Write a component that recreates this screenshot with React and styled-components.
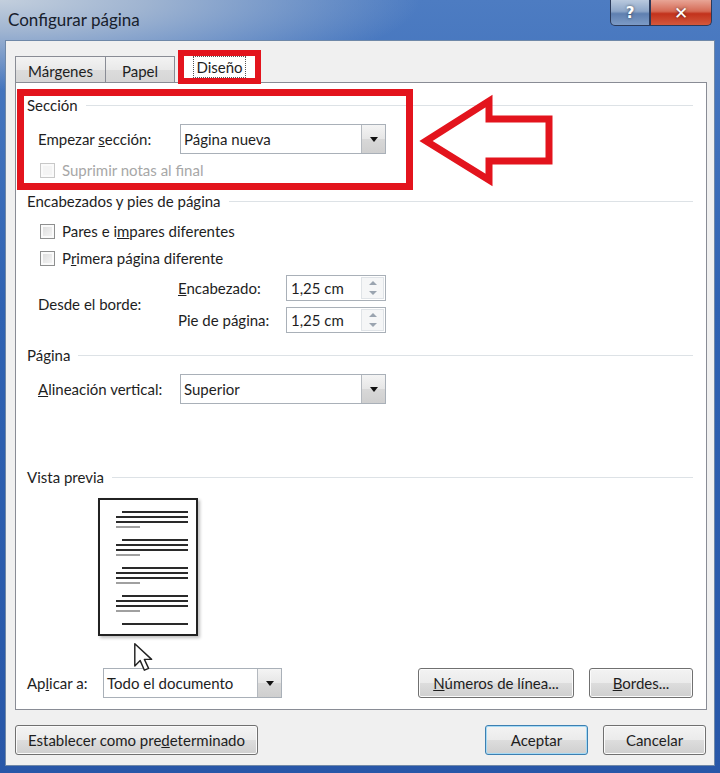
import styled, { createGlobalStyle } from "styled-components";

const GlobalStyle = createGlobalStyle`
  html, body {
    margin: 0;
    padding: 0;
    background: #2b5cab;
  }
  body {
    font-family: Lato, "Noto Sans", sans-serif;
    color: #1e1e1e;
  }
`;

const ROJO = "#e3141d";

const Ventana = styled.div`
  width: 720px;
  height: 773px;
  box-sizing: border-box;
  display: flex;
  flex-direction: column;
  padding: 0 5px 7px 5px;
  background:
    radial-gradient(ellipse 420px 90px at 0 0, #c3cfdd 0%, #9fb4d1 35%, rgba(90, 130, 190, 0) 100%),
    linear-gradient(180deg, #4d7cc2 0%, #2f62b2 40%, #2857a8 100%);
`;

const BarraTitulo = styled.div`
  height: 40px;
  display: flex;
  align-items: flex-start;
`;

const Titulo = styled.div`
  margin: 9px 0 0 3px;
  font-size: 17px;
  line-height: 22px;
  color: #17202c;
`;

const BotonesVentana = styled.div`
  margin-left: auto;
  margin-right: 3px;
  display: flex;
`;

const BotonVentana = styled.div`
  width: ${(p) => p.$ancho}px;
  height: 26px;
  box-sizing: border-box;
  border: 1px solid #2a3a5a;
  border-top: none;
  border-radius: ${(p) => (p.$cerrar ? "0 0 5px 0" : "0 0 0 5px")};
  display: flex;
  align-items: center;
  justify-content: center;
  color: #fff;
  font-family: "DejaVu Sans", sans-serif;
  font-weight: bold;
  font-size: ${(p) => (p.$cerrar ? 17 : 15)}px;
  text-shadow: 0 0 3px rgba(0, 0, 0, 0.6);
  background: ${(p) =>
    p.$cerrar
      ? "linear-gradient(180deg, #e8a596 0%, #d56a55 45%, #c2321c 55%, #d4583c 100%)"
      : "linear-gradient(180deg, #b9c9de 0%, #8da6c8 45%, #5f80b0 55%, #7d9bc6 100%)"};
`;

const Cliente = styled.div`
  flex: 1;
  display: flex;
  flex-direction: column;
  background: #f0f0f0;
  border: 1px solid #6f88a8;
  padding: 9px 7px 10px 9px;
`;

const FilaPestanas = styled.div`
  display: flex;
  align-items: flex-end;
  height: 33px;
  margin-bottom: -1px;
  position: relative;
  z-index: 1;
`;

const Pestana = styled.div`
  position: relative;
  box-sizing: border-box;
  width: ${(p) => p.$ancho}px;
  height: ${(p) => (p.$activa ? 33 : 27)}px;
  margin-left: ${(p) => (p.$activa ? 8 : p.$primera ? 0 : -1)}px;
  border: 1px solid #898c95;
  border-bottom: ${(p) => (p.$activa ? "none" : "1px solid #898c95")};
  background: ${(p) =>
    p.$activa ? "#ffffff" : "linear-gradient(180deg, #f3f3f3 0%, #e9e9e9 50%, #dcdcdc 51%, #d6d6d6 100%)"};
  font-size: 15px;
  display: flex;
  align-items: center;
  justify-content: center;
  padding-top: ${(p) => (p.$activa ? 0 : 2)}px;

  ${(p) =>
    p.$activa &&
    `
    &::after {
      content: "";
      position: absolute;
      left: -6px;
      right: -6px;
      top: -1px;
      bottom: -1px;
      border: 6px solid ${ROJO};
    }
  `}
`;

const TextoFoco = styled.span`
  outline: 1px dotted #555;
  outline-offset: 1px;
  padding: 0 1px;
`;

const Panel = styled.div`
  position: relative;
  height: 628px;
  box-sizing: border-box;
  background: #ffffff;
  border: 1px solid #898c95;
  padding: 12px 13px 0 11px;
  display: flex;
  flex-direction: column;
`;

const Grupo = styled.div`
  display: flex;
  align-items: center;
  height: 20px;
  margin-top: ${(p) => p.$arriba || 0}px;
  font-size: 15px;

  &::after {
    content: "";
    flex: 1;
    height: 1px;
    margin-left: 8px;
    background: #dde2e6;
  }
`;

const Fila = styled.div`
  display: flex;
  align-items: center;
  margin-top: ${(p) => p.$arriba || 0}px;
  margin-left: ${(p) => p.$sangria || 0}px;
  font-size: 15px;
`;

const FilaCasilla = styled(Fila)`
  height: 20px;
`;

const Etiqueta = styled.span`
  width: ${(p) => (p.$ancho ? `${p.$ancho}px` : "auto")};
  flex-shrink: 0;
  white-space: nowrap;
  color: ${(p) => (p.$inactiva ? "#a7a7a7" : "inherit")};
`;

const Combo = styled.div`
  width: ${(p) => p.$ancho}px;
  height: 30px;
  box-sizing: border-box;
  border: 1px solid #a9b0b8;
  background: #fff;
  display: flex;
  align-items: stretch;
  font-size: 15px;
`;

const ComboTexto = styled.span`
  flex: 1;
  padding-left: 3px;
  display: flex;
  align-items: center;
`;

const ComboBoton = styled.span`
  width: 23px;
  border-left: 1px solid #b4b9bf;
  background: linear-gradient(180deg, #f4f4f4 0%, #e6e6e6 50%, #d8d8d8 51%, #cfcfcf 100%);
  display: flex;
  align-items: center;
  justify-content: center;

  &::after {
    content: "";
    border-left: 4px solid transparent;
    border-right: 4px solid transparent;
    border-top: 5px solid #111;
  }
`;

const Casilla = styled.span`
  width: 15px;
  height: 15px;
  box-sizing: border-box;
  margin: 0 7px 0 2px;
  border: 1px solid ${(p) => (p.$inactiva ? "#c8c8c8" : "#8e8f8f")};
  background: ${(p) =>
    p.$inactiva ? "#f4f4f4" : "linear-gradient(135deg, #d9d9d9 0%, #ececec 60%, #f6f6f6 100%)"};
  box-shadow: inset 0 0 0 2px #fafafa;
  flex-shrink: 0;
`;

const BloqueBorde = styled.div`
  display: flex;
  align-items: center;
  margin: 7px 0 0 11px;
  font-size: 15px;
`;

const ColumnaSpin = styled.div`
  display: flex;
  flex-direction: column;
  gap: 6px;
`;

const Spin = styled.div`
  width: 100px;
  height: 26px;
  box-sizing: border-box;
  border: 1px solid #a9b0b8;
  background: #fff;
  display: flex;
`;

const SpinTexto = styled.span`
  flex: 1;
  padding-left: 4px;
  display: flex;
  align-items: center;
`;

const SpinFlechas = styled.span`
  width: 21px;
  margin: 1px;
  display: flex;
  flex-direction: column;
  border: 1px solid #dfe3e7;
  background: #f5f6f7;
`;

const SpinFlecha = styled.span`
  flex: 1;
  display: flex;
  align-items: center;
  justify-content: center;

  &::after {
    content: "";
    border-left: 4px solid transparent;
    border-right: 4px solid transparent;
    ${(p) => (p.$arriba ? "border-bottom" : "border-top")}: 4px solid #9aa4b0;
  }
`;

const HojaPrevia = styled.div`
  width: 100px;
  height: 138px;
  margin: 11px 0 0 71px;
  box-sizing: border-box;
  border: 2px solid #222;
  background: #fff;
  box-shadow: 2px 2px 3px rgba(0, 0, 0, 0.25);
`;

const Boton = styled.div`
  width: ${(p) => p.$ancho}px;
  height: 30px;
  box-sizing: border-box;
  border: 1px solid ${(p) => (p.$defecto ? "#3c7fb1" : "#707070")};
  border-radius: 3px;
  background: linear-gradient(180deg, #f3f3f3 0%, #ebebeb 49%, #dddddd 50%, #cfcfcf 100%);
  box-shadow: inset 0 0 0 1px ${(p) => (p.$defecto ? "#a6daf5" : "#fbfbfb")};
  display: flex;
  align-items: center;
  justify-content: center;
  font-size: 15px;
  white-space: nowrap;
`;

const FilaAplicar = styled.div`
  display: flex;
  align-items: center;
  margin-top: 32px;
  font-size: 15px;
  gap: 15px;
`;

const FilaInferior = styled.div`
  display: flex;
  gap: 15px;
  margin-top: 15px;
  padding-right: 1px;
`;

const Separador = styled.div`
  flex: 1;
`;

const MarcoRojo = styled.div`
  position: absolute;
  left: 1px;
  top: 6px;
  width: 396px;
  height: 101px;
  box-sizing: border-box;
  border: 7px solid ${ROJO};
  pointer-events: none;
`;

const Superpuesto = styled.svg`
  position: absolute;
  pointer-events: none;
`;

const lineasPrevia = () => {
  const grupos = [0, 28, 56, 84];
  const out = [];
  grupos.forEach((g, i) => {
    out.push(<line key={`a${i}`} x1="22" x2="88" y1={12 + g} y2={12 + g} />);
    out.push(<line key={`b${i}`} x1="16" x2="88" y1={17 + g} y2={17 + g} />);
    out.push(<line key={`c${i}`} x1="16" x2="88" y1={22 + g} y2={22 + g} />);
    out.push(
      <line key={`d${i}`} x1="16" x2="40" y1={27 + g} y2={27 + g} stroke="#777" strokeWidth="1.4" />
    );
  });
  out.push(<line key="fin" x1="22" x2="88" y1="124" y2="124" />);
  return out;
};

export default function App() {
  return (
    <>
      <GlobalStyle />
      <Ventana>
        <BarraTitulo>
          <Titulo>Configurar página</Titulo>
          <BotonesVentana>
            <BotonVentana $ancho={40}>?</BotonVentana>
            <BotonVentana $ancho={62} $cerrar>
              ✕
            </BotonVentana>
          </BotonesVentana>
        </BarraTitulo>

        <Cliente>
          <FilaPestanas>
            <Pestana $ancho={91} $primera>
              Márgenes
            </Pestana>
            <Pestana $ancho={70}>Papel</Pestana>
            <Pestana $ancho={73} $activa>
              <TextoFoco>Diseño</TextoFoco>
            </Pestana>
          </FilaPestanas>

          <Panel>
            <Grupo>Sección</Grupo>
            <Fila $arriba={9} $sangria={11}>
              <Etiqueta $ancho={142}>
                Empezar <u>s</u>ección:
              </Etiqueta>
              <Combo $ancho={206}>
                <ComboTexto>Página nueva</ComboTexto>
                <ComboBoton />
              </Combo>
            </Fila>
            <FilaCasilla $arriba={6} $sangria={11}>
              <Casilla $inactiva />
              <Etiqueta $inactiva>Suprimir notas al final</Etiqueta>
            </FilaCasilla>

            <Grupo $arriba={11}>Encabezados y pies de página</Grupo>
            <FilaCasilla $arriba={10} $sangria={11}>
              <Casilla />
              <Etiqueta>
                Pares e i<u>m</u>pares diferentes
              </Etiqueta>
            </FilaCasilla>
            <FilaCasilla $arriba={7} $sangria={11}>
              <Casilla />
              <Etiqueta>
                P<u>r</u>imera página diferente
              </Etiqueta>
            </FilaCasilla>
            <BloqueBorde>
              <Etiqueta $ancho={140}>Desde el borde:</Etiqueta>
              <ColumnaSpin>
                <Fila>
                  <Etiqueta $ancho={108}>
                    <u>E</u>ncabezado:
                  </Etiqueta>
                  <Spin>
                    <SpinTexto>1,25 cm</SpinTexto>
                    <SpinFlechas>
                      <SpinFlecha $arriba />
                      <SpinFlecha />
                    </SpinFlechas>
                  </Spin>
                </Fila>
                <Fila>
                  <Etiqueta $ancho={108}>Pie de página:</Etiqueta>
                  <Spin>
                    <SpinTexto>1,25 cm</SpinTexto>
                    <SpinFlechas>
                      <SpinFlecha $arriba />
                      <SpinFlecha />
                    </SpinFlechas>
                  </Spin>
                </Fila>
              </ColumnaSpin>
            </BloqueBorde>

            <Grupo $arriba={12}>Página</Grupo>
            <Fila $arriba={9} $sangria={11}>
              <Etiqueta $ancho={142}>
                <u>A</u>lineación vertical:
              </Etiqueta>
              <Combo $ancho={206}>
                <ComboTexto>Superior</ComboTexto>
                <ComboBoton />
              </Combo>
            </Fila>

            <Grupo $arriba={63}>Vista previa</Grupo>
            <HojaPrevia>
              <svg width="96" height="134" viewBox="0 0 96 134" stroke="#2a2a2a" strokeWidth="2">
                {lineasPrevia()}
              </svg>
            </HojaPrevia>

            <FilaAplicar>
              <Etiqueta $ancho={61}>
                Ap<u>l</u>icar a:
              </Etiqueta>
              <Combo $ancho={179}>
                <ComboTexto>Todo el documento</ComboTexto>
                <ComboBoton />
              </Combo>
              <Separador />
              <Boton $ancho={156}>
                <span>
                  <u>N</u>úmeros de línea...
                </span>
              </Boton>
              <Boton $ancho={104}>
                <span>
                  <u>B</u>ordes...
                </span>
              </Boton>
            </FilaAplicar>

            <MarcoRojo />
            <Superpuesto
              width="140"
              height="96"
              viewBox="0 0 140 96"
              style={{ left: 400, top: 8 }}
            >
              <polygon
                points="10,50 73,10 73,28 133,28 133,70 73,70 73,89"
                fill="none"
                stroke={ROJO}
                strokeWidth="7"
                strokeLinejoin="miter"
              />
            </Superpuesto>
            <Superpuesto width="24" height="30" viewBox="0 0 20 25" style={{ left: 117, top: 559 }}>
              <path
                d="M1.5 1.5 L1.5 20 L6 15.5 L9.5 23.5 L13 22 L9.5 14.5 L15.5 14.5 Z"
                fill="#fff"
                stroke="#222"
                strokeWidth="1.2"
                strokeLinejoin="round"
              />
            </Superpuesto>
          </Panel>

          <FilaInferior>
            <Boton $ancho={243}>
              <span>
                Establecer como pre<u>d</u>eterminado
              </span>
            </Boton>
            <Separador />
            <Boton $ancho={103} $defecto>
              Aceptar
            </Boton>
            <Boton $ancho={103}>Cancelar</Boton>
          </FilaInferior>
        </Cliente>
      </Ventana>
    </>
  );
}
